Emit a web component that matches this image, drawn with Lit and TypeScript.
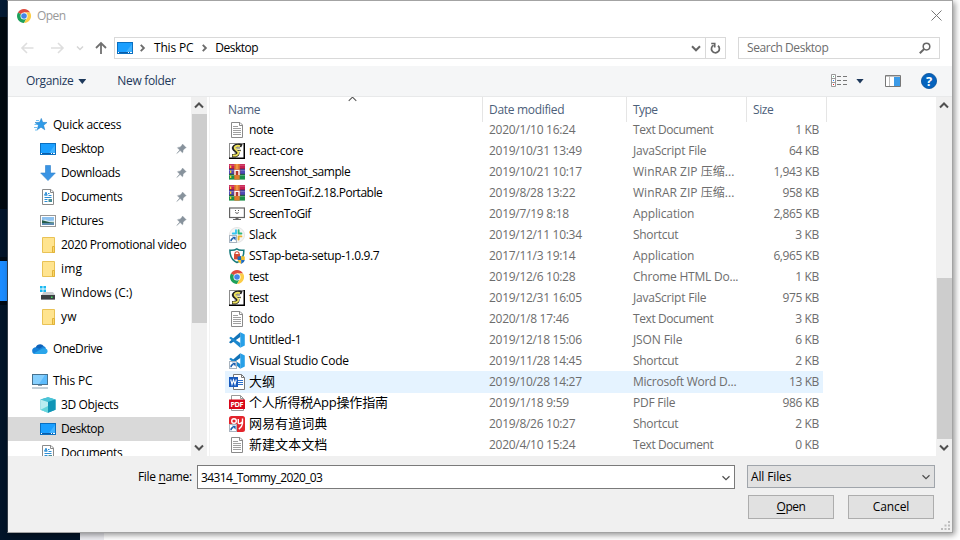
import { LitElement, html, css, svg } from "lit";
import { customElement, property } from "lit/decorators.js";

/** A run of text whose tracking is adjusted so that it fills a given width. */
@customElement("fit-text")
class FitText extends LitElement {
  @property({ type: String }) text = "";
  @property({ type: Number }) w = 0;
  @property({ type: Number }) accel = -1;
  static styles = css`
    :host { display: inline-block; white-space: pre; flex: none; }
    .key { text-decoration: underline; text-underline-offset: 2px; }
  `;
  updated() {
    const s = this.renderRoot.querySelector("span") as HTMLElement;
    s.style.letterSpacing = "0px";
    const natural = s.getBoundingClientRect().width;
    if (this.w > 0) s.style.letterSpacing = `${(this.w + 0.3 - natural) / [...this.text].length}px`;
  }
  render() {
    const a = this.accel;
    return a < 0
      ? html`<span>${this.text}</span>`
      : html`<span>${this.text.slice(0, a)}<span class="key">${this.text[a]}</span>${this.text.slice(a + 1)}</span>`;
  }
}

const shortcut = svg`<rect x=".5" y="8.5" width="7" height="7" fill="#fff" stroke="#a9b4bf"/><path d="M2 14.3C2 12.2 3 11.5 4.4 11.5" fill="none" stroke="#1d5fae" stroke-width="1.5"/><path d="M2.8 9.8H6.6V13.6Z" fill="#1d5fae"/>`;
const vscode = svg`<path d="M11.3.2 15.8 2.4V13.6L11.3 15.8Z" fill="#27a0e8"/><path d="M.2 10 11.3.2V5L1.8 11.4.2 10.6Z" fill="#1273b8"/><path d="M.2 6 1.8 4.7 11.3 11V15.8Z" fill="#1b88cf"/>`;
const desktop = svg`<rect x="0" y="2" width="16" height="12" fill="#0a6fc0"/><rect x="1" y="3" width="14" height="9" fill="#1a9fff"/><path d="M9 12 15 4V12Z" fill="#3fb2ff"/><path d="M1 12.5H15" stroke="#0a5ca8"/><path d="M1 12.5H2M11 12.5H12M13 12.5H15" stroke="#fff"/>`;
const folder = svg`<path d="M2.5.5H14.5V15.5H2.5Z" fill="#ffe48f" stroke="#e9c255"/><path d="M12.5 9.5H14.5V15.5H12.5Z" fill="#fbd766" stroke="#e0b23a"/>`;
const chrome = svg`<circle cx="8" cy="8" r="7" fill="#fff"/><path d="M8 8 1.9 4.5A7 7 0 0 1 14.1 4.5H8Z" fill="#df4b3e"/><path d="M8 8 1.94 4.5A7 7 0 0 0 8 15L11 9.75Z" fill="#1da05b"/><path d="M14.1 4.5A7 7 0 0 1 8 15L11.2 9.6 11 6 8 4.5Z" fill="#fccd47"/><circle cx="8" cy="8" r="3.5" fill="#fff"/><circle cx="8" cy="8" r="2.8" fill="#4285e8"/>`;
const page = svg`<path d="M2.5.5H11L13.5 3V15.5H2.5Z" fill="#fff" stroke="#8a8a8a"/><path d="M10.5.5V3.5H13.5" fill="none" stroke="#8a8a8a"/>`;

const icons: Record<string, unknown> = {
  chrome, desktop, folder,
  star: svg`<path d="M9.3 1.4 10.7 5.3 15 5.5 11.6 8.3 12.8 12.8 9 10.2 5.2 12.8 6.4 8.3 3 5.5 7.6 5.3Z" fill="#2f9be8" stroke="#1878c4" stroke-width=".5"/><path d="M4 3.5H7M2.5 7.5H5M2 10.5H5M3 13H5.5" stroke="#6fc0f2"/>`,
  download: svg`<path d="M5.5 .5H10.5V8H15.3L8 15.6.7 8H5.5Z" fill="#3a94e4" stroke="#2b7fcb" stroke-width=".6"/>`,
  document: svg`${page}<path d="M4.5 6.2 6 3.2 7.2 6.2ZM8 4.5H9.5M4.5 8.5H11.5M4.5 12.5H7.5M4.5 10.5H7.5M8.5 6.5H11.5" stroke="#2d8ed4" fill="#65b2e8"/><rect x="8.5" y="10" width="3.5" height="3" fill="#478d96"/>`,
  picture: svg`<rect x=".5" y="2.5" width="15" height="11" fill="#fff" stroke="#979797"/><rect x="2" y="4" width="12" height="8" fill="#8ec2f0"/><path d="M2 8 5 6.5 9 8 14 7.5V10H2Z" fill="#d5e9ef"/><path d="M2 7.3 6 8.3 10 9.3 14 9.4V10.5H2Z" fill="#245b48"/><path d="M2 10.3H14V12H2Z" fill="#5c8bb3"/>`,
  drive: svg`<path d="M0 1H2.6V3.6H0ZM3.4 1H6V3.6H3.4ZM0 4.4H2.6V7H0ZM3.4 4.4H6V7H3.4Z" fill="#19b8f1"/><path d="M3.5 7H13L15 10H1.5Z" fill="#c9cccf"/><rect x="1" y="10" width="14" height="4.5" fill="#3c4043"/><path d="M1 14.5H15" stroke="#85898c"/><rect x="11" y="11.5" width="1.5" height="1.5" fill="#43e05d"/>`,
  cloud: svg`<path d="M3.5 7.7A4.6 4.6 0 0 1 11.8 5.3L9 9.5Z" fill="#0f62b8"/><path d="M.2 10A3.2 3.2 0 0 1 5 6.8L10 9.1 4 13H3A3 3 0 0 1 .2 10Z" fill="#1680d8"/><path d="M7 8 11.5 5Q13.6 5.6 14 7.5L10.5 9.5Z" fill="#1a85db"/><path d="M1.6 12.6 9 8.3Q11 6.6 13.6 7.4A2.9 2.9 0 0 1 13.4 13H3Z" fill="#2aa5ea"/>`,
  computer: svg`<rect x=".5" y="1.5" width="15" height="10" fill="#5dbbfb" stroke="#47728f"/><path d="M1 2H13L7 11H1Z" fill="#86cffd"/><path d="M6 12.5H10" stroke="#8aa0af"/><path d="M0 15H16" stroke="#8ba0ae"/>`,
  cube: svg`<path d="M8 .3 15.5 2.6V12.7L8 15.7.5 12.7V2.6Z" fill="#28a9c3"/><path d="M.5 2.6 8 .3 15.5 2.6 8 5Z" fill="#4ac4d7"/><path d="M.5 2.6 8 5V15.7L.5 12.7Z" fill="#b9edf0"/><path d="M8 5 15.5 2.6V12.7L8 15.7Z" fill="#1095b6"/><path d="M.5 12.7 8 9V15.7Z" fill="#64d5db"/>`,
  text: svg`${page}<path d="M4 4.5H9M4 6.5H12M4 8.5H12M4 10.5H12M4 12.5H12" stroke="#a0a0a0"/>`,
  script: svg`<rect x=".5" y=".5" width="15" height="15" fill="#fff" stroke="#8c8c8c"/><path d="M15.25 0V15.25H0" fill="none" stroke="#000" stroke-width="1.5"/><path d="M13 2.8Q10.5 1.6 7 2.6 3.2 4.3 5.2 6.4L8.6 9Q9.4 11.6 6.5 12.8H3" fill="none" stroke="#222" stroke-width="3.4"/><path d="M11 3.2Q9 2.3 7 3.1 4.8 4.4 6.3 6L9 8.6Q9.8 11.2 7.2 12.5H3.6" fill="none" stroke="#f0e45e" stroke-width="1.9"/><path d="M7.5 5H11M8.5 7.3H12M5.5 10H8.5" stroke="#222" stroke-width=".9"/><path d="M8 6.2H11.5M9.5 8.5H12" stroke="#f7f0a0" stroke-width=".8"/>`,
  rar: svg`<path d="M0 0H16V5H0Z" fill="#c81f50"/><path d="M0 5H16V10H0Z" fill="#4f4bb5"/><path d="M0 10H16V15.6H0Z" fill="#1c8f49"/><path d="M0 5H16M0 10.2H16" stroke="#2e2440" stroke-width=".6"/><path d="M0 1.2H16M0 6.4H16M0 11.5H16" stroke="#fff" stroke-opacity=".25"/><path d="M1 1.5H2.3V4H1ZM1 6.5H2.3V9H1ZM1 11.7H2.3V14H1Z" fill="#f5d02e"/><path d="M5.3 0H10.7V15.6H5.3Z" fill="#e07a2c"/><path d="M4.8 5.3H11.2V11H4.8Z" fill="#b5372c"/><path d="M6 11V6.4H10V11" fill="none" stroke="#fff" stroke-width="1.4"/><path d="M7.3 0H8.7V5H7.3Z" fill="#f7a04d"/>`,
  gif: svg`<rect x=".6" y="2" width="14.8" height="9.5" fill="#fff" stroke="#636363" stroke-width="1.2"/><path d="M6 4.5H7M9 4.5H10M6.3 6.5Q8 8.3 9.7 6.5" fill="none" stroke="#555"/><path d="M6.5 12H9.5V13H12V14H4V13H6.5Z" fill="#666"/>`,
  slack: svg`<circle cx="8" cy="8" r="7.6" fill="#f4f4f4" stroke="#d8d8d8" stroke-width=".6"/><path d="M7 3.3V6.5M3.8 6.5H6.5" stroke="#36c5f0" stroke-width="1.9" stroke-linecap="round"/><path d="M9.6 3.3V6.5M10 6.5H12.4" stroke="#2eb67d" stroke-width="1.9" stroke-linecap="round"/><path d="M9.6 9.4H12.4M9.6 9.6V12.5" stroke="#ecb22e" stroke-width="1.9" stroke-linecap="round"/><path d="M7 9.4V12.5" stroke="#e01e5a" stroke-width="1.9"/>${shortcut}`,
  shield: svg`<path d="M.9 2.2Q5 2.8 7.8.9 10.5 2.8 14.8 2.2 15 11.5 8 14.5.8 11.2.9 2.2Z" fill="#fff" stroke="#177b7d" stroke-width="1.5"/><rect x="5" y="6" width="6" height="5.4" fill="#d64c35"/><path d="M6 6.5V5Q8 2.5 10 5V6.5" fill="none" stroke="#d64c35" stroke-width="1.2"/><path d="M8.6 8.5Q11 8.7 12.2 7.7V12H8.6Z" fill="#1e69bd"/><path d="M12.2 7.7Q13.4 8.7 15.8 8.5V12H12.2Z" fill="#f3c12e"/><path d="M8.6 12H12.2V16Q9 14.7 8.6 12Z" fill="#f3c12e"/><path d="M12.2 12H15.8Q15.4 14.7 12.2 16Z" fill="#1e69bd"/>`,
  vscode,
  vslink: svg`${vscode}${shortcut}`,
  word: svg`<path d="M4.5.5H12.5L15.5 3.5V15.5H4.5Z" fill="#fff" stroke="#777"/><path d="M12.5.5V3.5H15.5" fill="none" stroke="#777"/><path d="M9 6.5H14M9 8.5H14M9 10.5H14" stroke="#2b6fc9"/><rect y="3" width="9" height="10" fill="#185abd"/><path d="M1.7 5.5 3 10.3 4.5 6 6 10.3 7.3 5.5" fill="none" stroke="#fff" stroke-width="1.1"/>`,
  pdf: svg`<path d="M2.5.5H11.5L14.5 3.5V15.5H2.5Z" fill="#fff" stroke="#999"/><path d="M11.5.5V3.5H14.5" fill="none" stroke="#999"/><rect y="4.5" width="16" height="9.5" fill="#d8081b"/><text x="8" y="12" text-anchor="middle" textLength="13" font-family="Open Sans, sans-serif" font-size="7.3" font-weight="700" fill="#fff">PDF</text>`,
  youdao: svg`<rect width="16" height="16" rx="2.5" fill="#e3242b"/><circle cx="5" cy="5" r="2.3" fill="none" stroke="#fff" stroke-width="1.4"/><path d="M9.3 3V7.6M13.5 2.5V7.5Q13.3 10.5 9.8 13.2M9.3 7.4Q11.5 8.2 13.2 6" fill="none" stroke="#fff" stroke-width="1.4"/>${shortcut}`,
  pin: svg`<path d="M8.6 1.2 12.8 5.4 11.6 5.9 9.2 8.2Q9.4 10 8.6 11.2L5.9 8.6 2 12 5.4 8.1 2.8 5.4Q4 4.6 5.8 4.8L8.1 2.4Z" fill="#87929c" stroke="#87929c" stroke-width=".5"/>`,
};
const icon = (name: string, cls = "ic") => html`<svg class=${cls} viewBox="0 0 16 16">${icons[name]}</svg>`;
const chevron = (cls: string, d: string, sw = 1.8) => html`<svg class=${cls} viewBox="0 0 16 16"><path d=${d} fill="none" stroke="currentColor" stroke-width=${sw}/></svg>`;
const UP = "M4 10 8 6 12 10";
const DOWN = "M4 6 8 10 12 6";

type Place = [string, string, number, string];
const places: Place[] = [
  ["star", "Quick access", 68, "top"],
  ["desktop", "Desktop", 42.5, "pin"],
  ["download", "Downloads", 58.7, "pin"],
  ["document", "Documents", 61, "pin"],
  ["picture", "Pictures", 42, "pin"],
  ["folder", "2020 Promotional video", 125, ""],
  ["folder", "img", 21, ""],
  ["drive", "Windows (C:)", 71, ""],
  ["folder", "yw", 15.5, ""],
  ["cloud", "OneDrive", 49, "top gap"],
  ["computer", "This PC", 39, "top gap"],
  ["cube", "3D Objects", 57, ""],
  ["desktop", "Desktop", 42.5, "sel"],
  ["document", "Documents", 61, ""],
];

type FileRow = [string, string, number, string, string, number, string];
const files: FileRow[] = [
  ["text", "note", 24.3, "2020/1/10 16:24", "Text Document", 80, "1 KB"],
  ["script", "react-core", 54, "2019/10/31 13:49", "JavaScript File", 73, "64 KB"],
  ["rar", "Screenshot_sample", 101, "2019/10/21 10:17", "WinRAR ZIP 压缩...", 101, "1,943 KB"],
  ["rar", "ScreenToGif.2.18.Portable", 133, "2019/8/28 13:22", "WinRAR ZIP 压缩...", 101, "958 KB"],
  ["gif", "ScreenToGif", 61.5, "2019/7/19 8:18", "Application", 61, "2,865 KB"],
  ["slack", "Slack", 27, "2019/12/11 10:34", "Shortcut", 45, "3 KB"],
  ["shield", "SSTap-beta-setup-1.0.9.7", 130, "2017/11/3 19:14", "Application", 61, "6,965 KB"],
  ["chrome", "test", 19, "2019/12/6 10:28", "Chrome HTML Do...", 105, "1 KB"],
  ["script", "test", 19, "2019/12/31 16:05", "JavaScript File", 73, "975 KB"],
  ["text", "todo", 25, "2020/1/8 17:46", "Text Document", 80, "3 KB"],
  ["vscode", "Untitled-1", 52, "2019/12/18 15:06", "JSON File", 49, "6 KB"],
  ["vslink", "Visual Studio Code", 99.5, "2019/11/28 14:45", "Shortcut", 45, "2 KB"],
  ["word", "大纲", 25.5, "2019/10/28 14:27", "Microsoft Word D...", 103, "13 KB"],
  ["pdf", "个人所得税App操作指南", 138.5, "2019/1/18 9:59", "PDF File", 42, "986 KB"],
  ["youdao", "网易有道词典", 78, "2019/8/26 10:27", "Shortcut", 45, "2 KB"],
  ["text", "新建文本文档", 78, "2020/4/10 15:24", "Text Document", 80, "0 KB"],
];
/** Digits are 6.45px wide; slashes, colons, commas and spaces are narrower. */
const numWidth = (s: string) =>
  [...s].reduce((n, c) => n + (/\d/.test(c) ? 6.45 : c === "/" ? 4.7 : c === "K" ? 7 : c === "B" ? 6.9 : c === " " ? 3.3 : 2.6), 0) - 0.3;

@customElement("app-root")
class AppRoot extends LitElement {
  static styles = css`
    * { box-sizing: border-box; }
    :host { display: block; position: relative; width: 960px; height: 540px; overflow: hidden; background: #fff;
      font: 12px/16px "Open Sans", "Noto Sans CJK SC", sans-serif; color: #000; }
    .backdrop { display: flex; height: 540px; }
    .dark { width: 80px; background: linear-gradient(#041a33 0 17px, #000910 17px 209px, #02142a 209px 257px, #000a14 257px 261px, #1c8cff 261px 301px, #000a14 301px 305px, #021428 305px); }
    .strip { width: 24px; background: #ececf1; }
    .dialog { position: absolute; left: 7px; top: 0; width: 946px; height: 533px; border: 1px solid #a3a3a3; border-left-color: #343d48; background: #fff;
      box-shadow: 2px 2px 6px rgba(0,0,0,.42); display: flex; flex-direction: column; }
    svg { display: block; flex: none; }
    .ic { width: 16px; height: 16px; }
    .title { display: flex; align-items: center; height: 29px; padding: 0 10px 0 8px; color: #999; }
    .title .ic { margin-right: 5px; }
    .grow { flex: 1; }
    .close { width: 11px; height: 11px; }
    .nav { display: flex; height: 36px; padding: 7px 12px 0 12px; }
    .arrows { display: flex; width: 94px; height: 22px; align-items: center; }
    .a1 { width: 16px; height: 16px; margin-right: 13px; color: #dedede; }
    .a2 { width: 8px; height: 8px; margin-right: 9px; margin-left: -2px; color: #d5d5d5; }
    .a3 { width: 16px; height: 16px; color: #707070; }
    .box { display: flex; align-items: center; height: 22px; border: 1px solid #d9d9d9; background: #fff; }
    .address { width: 612px; padding-left: 2px; }
    .crumb { width: 10px; height: 10px; color: #6c6c6c; margin: 0 7px 0 4px; }
    .address .crumb.second { margin: 0 6px 0 6px; }
    .drop { width: 16px; height: 16px; color: #666; margin-right: 1px; }
    .refresh { width: 20px; height: 20px; border-left: 1px solid #d9d9d9; color: #666; }
    .search { width: 202px; margin-left: 12px; padding: 0 8px; color: #6d6d6d; justify-content: space-between; }
    .lens { width: 12px; height: 12px; }
    .toolbar { display: flex; align-items: center; height: 31px; background: #f5f6f7; border-bottom: 1px solid #e8e9ea; padding: 0 15px 0 18px; color: #1e395b; }
    .tri { width: 8px; height: 5px; background: #1e395b; clip-path: polygon(0 0, 100% 0, 50% 100%); margin: 1px 31px 0 5px; }
    .tri.small { margin: 0 21px 0 9px; }
    .help { margin-left: 20px; }
    .body { display: flex; height: 359px; overflow: hidden; }
    .side { width: 183px; padding-top: 16px; overflow: hidden; }
    .place { display: flex; align-items: center; height: 24px; padding-left: 32px; width: 182px; }
    .place .ic { margin-right: 5px; }
    .top { padding-left: 24px; }
    .gap { margin-top: 8px; }
    .sel { background: #d9d9d9; }
    .pinic { width: 14px; height: 14px; margin: 1px 1px 0 auto; }
    .bar { width: 16px; height: 359px; background: #f0f0f0; display: flex; flex-direction: column; align-items: center; color: #505050; }
    .bar .ar { width: 16px; height: 17px; }
    .thumb { width: 15px; height: 209px; background: #cdcdcd; }
    .right .thumb { margin-top: 164px; height: 161px; }
    .bar .ar:last-child { margin-top: auto; }
    .list { flex: 1; border-left: 1px solid #f3f3f3; margin-left: 2px; display: flex; flex-direction: column; overflow: hidden; position: relative; }
    .head { display: flex; height: 25px; flex: none; color: #4c607a; background: #fff; z-index: 1; position: relative; }
    .h { border-right: 1px solid #e5e5e5; height: 25px; padding: 5px 0 0 6px; }
    .h:nth-child(1) { width: 273px; padding-left: 18px; }
    .h.date { width: 144px; }
    .h.type { width: 120px; }
    .h.size { width: 80px; }
    .sort { position: absolute; left: 137px; top: -4px; width: 11px; height: 11px; color: #555; }
    .rows { margin: -3px 0 0 15px; width: 598px; }
    .row { display: grid; grid-template-columns: 24px 240px 144px 109px 1fr; align-items: center; height: 21px; color: #6d6d6d; padding-right: 4px; }
    .row .ic { margin-left: 4px; }
    .row.hot { background: #e5f3ff; height: 22px; margin-bottom: -1px; padding-bottom: 1px; }
    .name { color: #000; }
    .cjk { font-size: 13px; margin-bottom: 2px; }
    .num { justify-self: end; }
    .foot { flex: 1; background: #f0f0f0; display: grid; grid-template-columns: 538px 188px; column-gap: 12px; grid-template-rows: 24px 24px; row-gap: 6px; padding: 9px 0 0 189px; position: relative; }
    .field { display: flex; align-items: center; }
    .label { position: absolute; left: 130px; top: 13px; }
    .input { height: 24px; border: 1px solid #7a7a7a; background: #fff; padding: 1px 1px 0 3px; justify-content: space-between; }
    .select { height: 23px; background: #e1e1e1; border: 1px solid #a0a5ab; padding: 1px 1px 0 3px; justify-content: space-between; }
    .chev { width: 14px; height: 14px; color: #4d4d4d; }
    .buttons { grid-column: 2; display: flex; gap: 14px; padding-left: 1px; }
    .btn { width: 86px; height: 24px; border: 1px solid #adadad; background: #e1e1e1; display: flex; align-items: center; justify-content: center; }
    .grip { position: absolute; right: 2px; bottom: 2px; width: 9px; height: 9px; }
  `;
  render() {
    return html`
      <div class="backdrop"><div class="dark"></div><div class="strip"></div></div>
      <div class="dialog">
        <div class="title">
          ${icon("chrome")}<fit-text text="Open" .w=${28.3}></fit-text><span class="grow"></span>
          <svg class="close" viewBox="0 0 11 11"><path d="M.5.5 10.5 10.5M10.5.5.5 10.5" stroke="#777" fill="none"/></svg>
        </div>
        <div class="nav">
          <div class="arrows">
            <svg class="a1" viewBox="0 0 16 16"><path d="M13.5 8H2.5M7 3 2 8 7 13" fill="none" stroke="currentColor" stroke-width="1.6"/></svg>
            <svg class="a1" viewBox="0 0 16 16"><path d="M2 8H13.5M9 3 14 8 9 13" fill="none" stroke="currentColor" stroke-width="1.6"/></svg>
            ${chevron("a2", "M2 5 8 11 14 5", 3)}
            <svg class="a3" viewBox="0 0 16 16"><path d="M8 14V3M3 8 8 3 13 8" fill="none" stroke="currentColor" stroke-width="1.8"/></svg>
          </div>
          <div class="box address">
            ${icon("desktop")}${chevron("crumb", "M6 3 11 8 6 13", 3)}<fit-text text="This PC" .w=${39}></fit-text>${chevron("crumb second", "M6 3 11 8 6 13", 3)}<fit-text text="Desktop" .w=${42.5}></fit-text>
            <span class="grow"></span>${chevron("drop", "M4 6.3 8 10.3 12 6.3", 2)}
            <svg class="refresh" viewBox="0 0 20 20"><path d="M12.6 7.6A4.2 4.2 0 1 1 8 7.1" fill="none" stroke="currentColor" stroke-width="1.8"/><path d="M5.5 5.2H9.2V9.4" fill="none" stroke="currentColor" stroke-width="1.7"/></svg>
          </div>
          <div class="box search"><fit-text text="Search Desktop" .w=${81}></fit-text>
            <svg class="lens" viewBox="0 0 12 12"><circle cx="7.5" cy="4.6" r="3.3" fill="none" stroke="#666" stroke-width="1.5"/><path d="M5 7.1.8 11.3" stroke="#666" stroke-width="2"/></svg>
          </div>
        </div>
        <div class="toolbar">
          <fit-text text="Organize" .w=${47}></fit-text><span class="tri"></span><fit-text text="New folder" .w=${58}></fit-text><span class="grow"></span>
          <svg width="16" height="14" viewBox="0 0 16 14"><path d="M.5.5H4.5V12.5H.5ZM.5 4.5H4.5M.5 8.5H4.5" fill="#fff" stroke="#999"/><path d="M6 2.5H10M12 2.5H16M6 6.5H10M12 6.5H16M6 10.5H10M12 10.5H16" stroke="#777"/><path d="M2 2.5H3" stroke="#6a8"/><path d="M2 6.5H3" stroke="#38f"/><path d="M2 10.5H3" stroke="#e22"/></svg>
          <span class="tri small"></span>
          <svg width="16" height="12" viewBox="0 0 16 12"><path d="M.5.5H15.5V11.5H.5Z" fill="#fff" stroke="#777"/><path d="M1 1H15" stroke="#888"/><path d="M4.5 1V11" stroke="#bbb"/><rect x="9" y="2" width="6" height="9" fill="#3c9be8"/></svg>
          <svg class="help" width="16" height="16" viewBox="0 0 16 16"><circle cx="8" cy="8" r="7.6" fill="#0563bd" stroke="#07509a" stroke-width=".8"/><text x="8" y="12.7" text-anchor="middle" font-size="13" font-weight="700" fill="#fff">?</text></svg>
        </div>
        <div class="body">
          <div class="side">
            ${places.map(([ic, t, w, c]) => html`<div class="place ${c}">${icon(ic)}<fit-text .text=${t} .w=${w}></fit-text>${c === "pin" ? icon("pin", "pinic") : ""}</div>`)}
          </div>
          <div class="bar">${chevron("ar", UP, 2)}<div class="thumb"></div>${chevron("ar", DOWN, 2)}</div>
          <div class="list">
            <div class="head">
              <div class="h"><fit-text text="Name" .w=${32}></fit-text></div>
              <div class="h date"><fit-text text="Date modified" .w=${75}></fit-text></div>
              <div class="h type"><fit-text text="Type" .w=${24}></fit-text></div>
              <div class="h size"><fit-text text="Size" .w=${20}></fit-text></div>
              ${chevron("sort", "M2.5 11.5 8 6 13.5 11.5", 1.5)}
            </div>
            <div class="rows">
              ${files.map(([ic, n, w, d, t, tw, s]) => html`<div class="row ${ic === "word" ? "hot" : ""}">${icon(ic)}
                <fit-text class="name ${/[\u4e00-\u9fff]/.test(n) ? "cjk" : ""}" .text=${n} .w=${w}></fit-text>
                <fit-text .text=${d} .w=${numWidth(d)}></fit-text>
                <fit-text .text=${t} .w=${tw}></fit-text>
                <fit-text class="num" .text=${s} .w=${numWidth(s)}></fit-text></div>`)}
            </div>
          </div>
          <div class="bar right">${chevron("ar", UP, 2)}<div class="thumb"></div>${chevron("ar", DOWN, 2)}</div>
        </div>
        <div class="foot">
          <fit-text class="label" text="File name:" .w=${53.5} .accel=${5}></fit-text>
          <div class="field input"><fit-text text="34314_Tommy_2020_03" .w=${121}></fit-text>${chevron("chev", DOWN, 1.4)}</div>
          <div class="field select"><fit-text text="All Files" .w=${40}></fit-text>${chevron("chev", DOWN, 1.4)}</div>
          <div class="buttons"><div class="btn"><fit-text text="Open" .w=${28.5} .accel=${0}></fit-text></div><div class="btn"><fit-text text="Cancel" .w=${36}></fit-text></div></div>
          <svg class="grip" viewBox="0 0 9 9"><path d="M7 0H9V2H7ZM7 3.5H9V5.5H7ZM3.5 3.5H5.5V5.5H3.5ZM7 7H9V9H7ZM3.5 7H5.5V9H3.5ZM0 7H2V9H0Z" fill="#bcbcbc"/></svg>
        </div>
      </div>`;
  }
}
